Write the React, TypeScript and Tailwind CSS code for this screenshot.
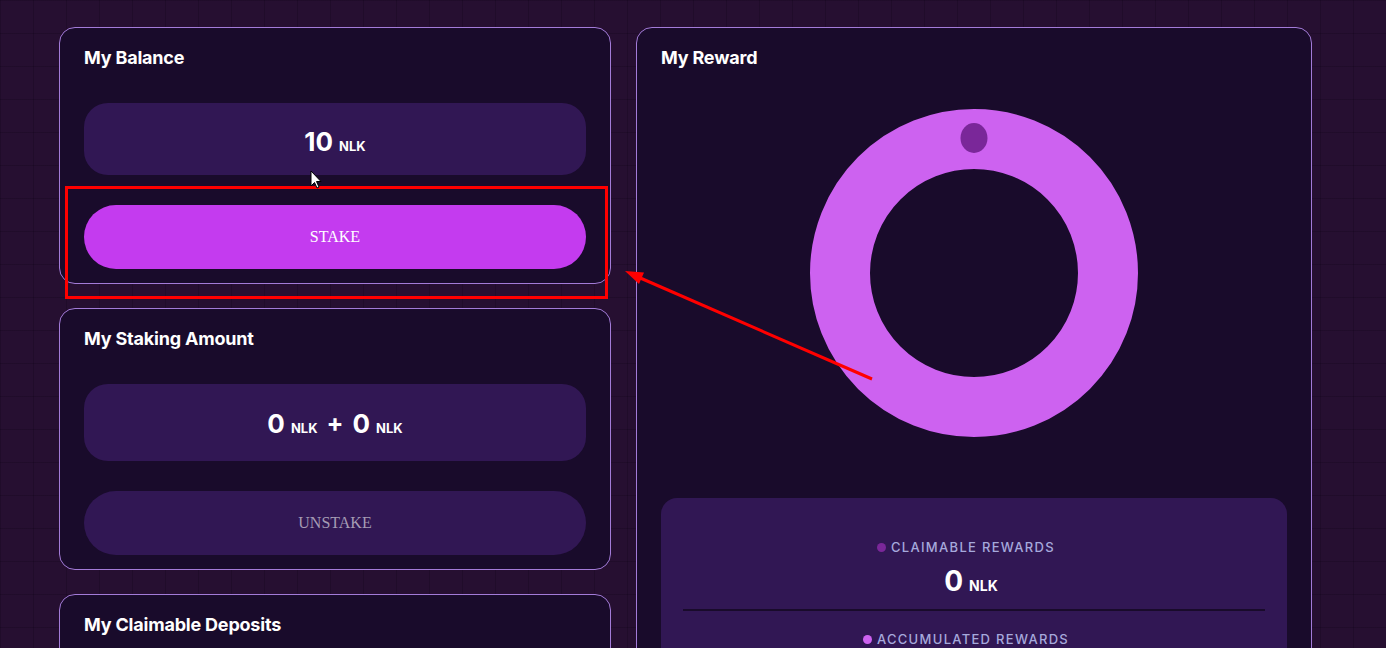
import React from "react";

const font = { fontFamily: "Inter, 'Liberation Sans', sans-serif" };

const Card: React.FC<{ title: string; children?: React.ReactNode; className?: string }> = ({
  title,
  children,
  className = "",
}) => {
  return (
    <div
      className={`rounded-[16px] border border-[#a37bd8] bg-[#190b2b] px-6 pt-[16px] ${className}`}
    >
      <div className="text-[18px] leading-[28px] font-bold text-white tracking-[-0.2px]">{title}</div>
      {children}
    </div>
  );
};

const Amount: React.FC<{ value: string; big?: boolean }> = ({ value, big }) => (
  <span className="inline-flex items-baseline gap-[6px]">
    <span className={`${big ? "text-[28px]" : "text-[26px]"} font-bold text-white`}>{value}</span>
    <span className={`${big ? "text-[14px]" : "text-[13px]"} font-bold text-white`}>NLK</span>
  </span>
);

const App: React.FC = () => {
  return (
    <div
      style={font}
      className="relative h-screen w-full overflow-hidden bg-[#260f31] bg-[linear-gradient(to_right,rgba(10,0,20,0.22)_1px,transparent_1px),linear-gradient(to_bottom,rgba(10,0,20,0.22)_1px,transparent_1px)] bg-[size:33px_33px]"
    >
      <div className="flex gap-[25px] pl-[59px] pt-[27px]">
        {/* left column */}
        <div className="flex w-[552px] flex-col gap-[24px]">
          <Card title="My Balance" className="pb-[14px]">
            <div className="mt-[31px] flex h-[72px] items-center justify-center rounded-[24px] bg-[#311754] pt-[4px]">
              <Amount value="10" />
            </div>
            <button
              className="mt-[30px] flex h-[64px] w-full items-center justify-center rounded-full bg-[#c43bef] text-[16px] text-white"
              style={{ fontFamily: "'Liberation Serif', serif" }}
            >
              STAKE
            </button>
          </Card>

          <Card title="My Staking Amount" className="pb-[14px]">
            <div className="mt-[31px] flex h-[77px] items-center justify-center gap-[9px] rounded-[24px] bg-[#311754] pt-[2px]">
              <Amount value="0" />
              <span className="text-[25px] font-bold text-white">+</span>
              <Amount value="0" />
            </div>
            <button
              className="mt-[30px] flex h-[64px] w-full items-center justify-center rounded-full bg-[#311754] text-[16px] text-[#a59cb4]"
              style={{ fontFamily: "'Liberation Serif', serif" }}
            >
              UNSTAKE
            </button>
          </Card>

          <Card title="My Claimable Deposits" className="h-[200px]" />
        </div>

        {/* right column */}
        <Card title="My Reward" className="h-[700px] w-[676px]">
          <div className="mt-[36px] flex justify-center">
            <svg width="330" height="330" viewBox="0 0 330 330">
              <circle cx="165" cy="165" r="134" fill="none" stroke="#cd62f0" strokeWidth="60" />
              <ellipse cx="165" cy="30" rx="13.5" ry="15" fill="#7a2799" />
            </svg>
          </div>

          <div className="mt-[60px] rounded-[16px] bg-[#311754] px-[22px] pt-[40px] pb-6">
            <div className="flex items-center justify-center gap-[5px] pr-[16px] text-[13px] leading-[18px] font-medium tracking-[0.1em] text-[#a6a9dc]">
              <span className="h-[9px] w-[9px] rounded-full bg-[#7a2799]" />
              CLAIMABLE REWARDS
            </div>
            <div className="mt-[9px] flex h-[32px] items-center justify-center pr-[6px]">
              <Amount value="0" big />
            </div>
            <div className="mt-[12px] h-[2px] w-full bg-[#190b2b]" />
            <div className="mt-[19px] flex items-center justify-center gap-[5px] pr-[16px] text-[13px] leading-[18px] font-medium tracking-[0.1em] text-[#a6a9dc]">
              <span className="h-[9px] w-[9px] rounded-full bg-[#cd62f0]" />
              ACCUMULATED REWARDS
            </div>
          </div>
        </Card>
      </div>

      {/* annotation overlay */}
      <svg className="pointer-events-none absolute inset-0" width="1386" height="648">
        <rect x="66.5" y="187.5" width="540" height="110" fill="none" stroke="#ff0000" strokeWidth="3" />
        <line x1="872" y1="379" x2="638" y2="277" stroke="#ff0000" strokeWidth="3" />
        <polygon points="625,271 644,272.5 639,284" fill="#ff0000" />
        <path
          d="M311 171 L311 186 L314.5 182.5 L317 188 L319 187 L316.5 181.5 L321 181.5 Z"
          fill="#ffffff"
          stroke="#000000"
          strokeWidth="1"
        />
      </svg>
    </div>
  );
};

export default App;
